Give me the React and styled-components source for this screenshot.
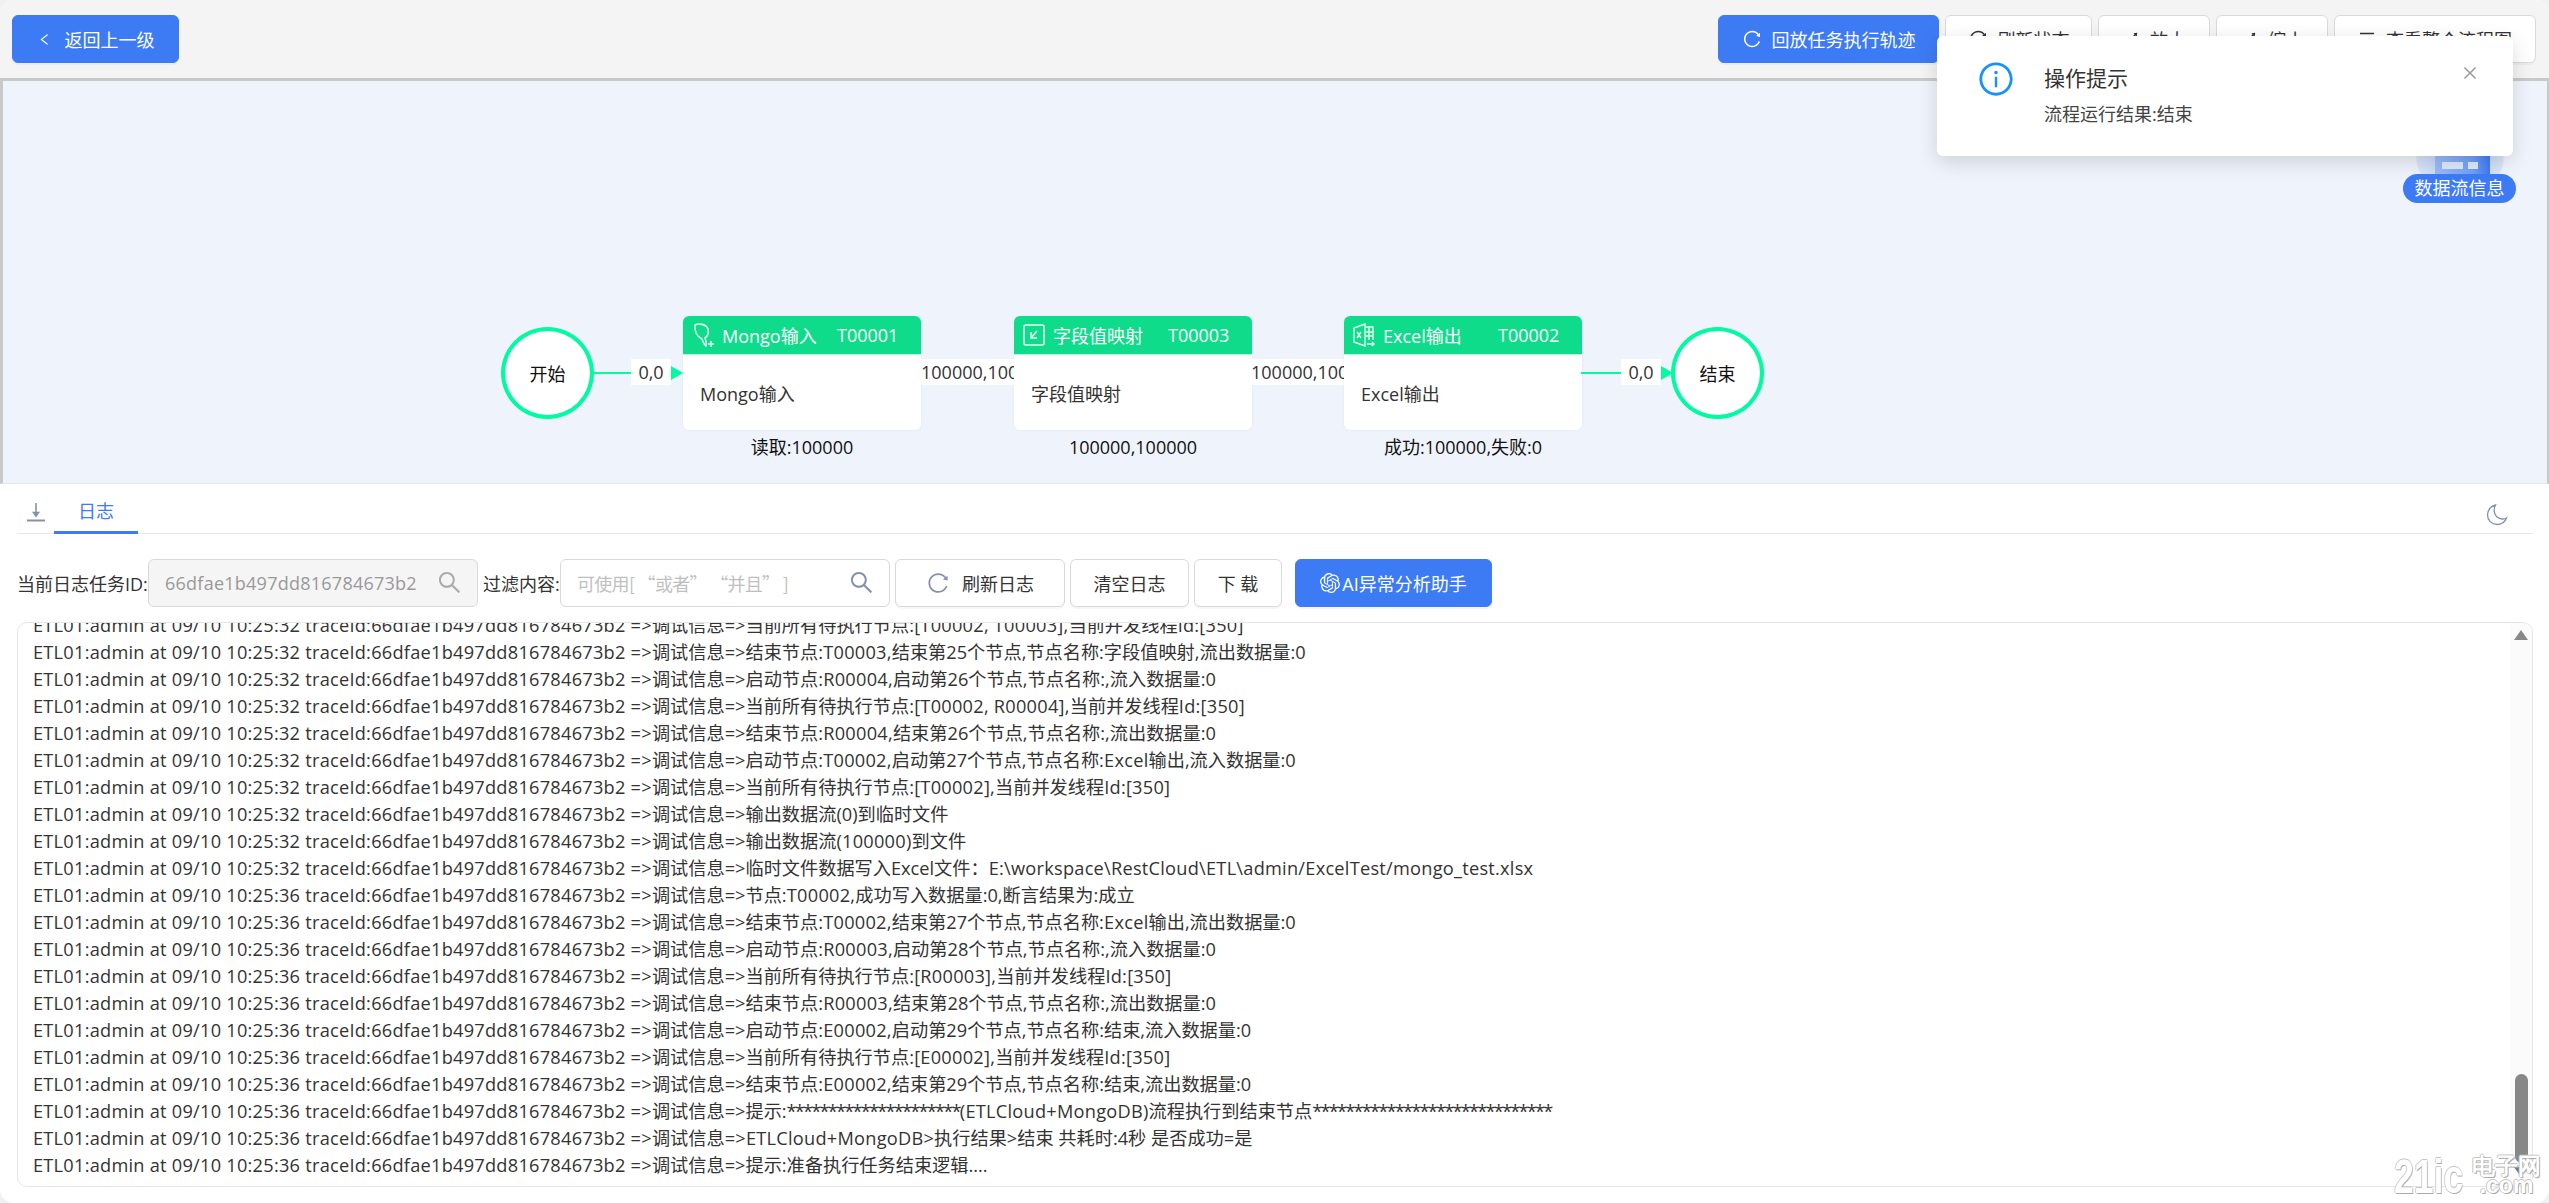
import React from "react";
import styled, { createGlobalStyle } from "styled-components";
import {
  AiOutlineLeft,
  AiOutlineReload,
  AiOutlineSearch,
  AiOutlineClose,
  AiOutlineInfoCircle,
  AiOutlineMenu,
  AiOutlineExpandAlt,
} from "react-icons/ai";
import { SiOpenai } from "react-icons/si";

const FONT = `"Open Sans", "Noto Sans CJK SC", sans-serif`;

const GlobalStyle = createGlobalStyle`
  html, body {
    margin: 0;
    padding: 0;
    background: #f1f1f1;
  }
  * { box-sizing: border-box; }
`;

const Page = styled.div`
  position: relative;
  width: 2549px;
  height: 1203px;
  display: flex;
  flex-direction: column;
  overflow: hidden;
  border-radius: 14px;
  background: #fff;
  font-family: ${FONT};
  font-size: 18px;
  color: #333;
`;

const TopBar = styled.div`
  height: 78px;
  flex: none;
  background: #f4f4f4;
  padding: 15px 13px 0 12px;
  display: flex;
  gap: 6px;
`;

const Btn = styled.div`
  width: ${(p) => p.$w}px;
  height: 48px;
  flex: none;
  display: flex;
  align-items: center;
  justify-content: center;
  gap: ${(p) => p.$gap ?? 10}px;
  border-radius: 6px;
  white-space: nowrap;
  font-size: 18px;
  background: ${(p) => (p.$primary ? "#3d7bf5" : "#fff")};
  color: ${(p) => (p.$primary ? "#fff" : "#333")};
  border: 1.5px solid ${(p) => (p.$primary ? "#3d7bf5" : "#d9d9d9")};
  box-shadow: 0 2px 0 rgba(0, 0, 0, 0.03);
`;

const Spacer = styled.div`
  flex: 1;
`;

const Canvas = styled.div`
  position: relative;
  height: 406px;
  flex: none;
  background: #eff3fb;
  border-top: 3px solid #c9c9c9;
  border-left: 3px solid #c9c9c9;
  border-right: 2px solid #c9c9c9;
  border-bottom: 1px solid #e6e6e6;
`;

const Terminal = styled.div`
  position: absolute;
  left: ${(p) => p.$x - 3}px;
  top: 246px;
  width: 93px;
  height: 92px;
  border-radius: 50%;
  border: 4px solid #00fba0;
  background: #fff;
  color: #111;
  display: flex;
  align-items: center;
  justify-content: center;
`;

const Edge = styled.div`
  position: absolute;
  left: ${(p) => p.$x - 3}px;
  top: 291px;
  width: ${(p) => p.$w}px;
  height: 2px;
  background: #00fba0;
`;

const EdgeLabel = styled.div`
  position: absolute;
  left: ${(p) => p.$x - 3}px;
  top: 278px;
  width: ${(p) => p.$w}px;
  height: 26px;
  line-height: 26px;
  background: #fff;
  color: #333;
  overflow: hidden;
  white-space: nowrap;
  text-align: ${(p) => p.$align || "center"};
`;

const Arrow = styled.div`
  position: absolute;
  left: ${(p) => p.$x - 3}px;
  top: 285px;
  width: 0;
  height: 0;
  border-style: solid;
  border-width: 7px 0 7px 12px;
  border-color: transparent transparent transparent #00fba0;
`;

const NodeWrap = styled.div`
  position: absolute;
  left: ${(p) => p.$x - 3}px;
  top: 235px;
  width: 238px;
`;

const NodeCard = styled.div`
  height: 114px;
  background: #fff;
  border-radius: 6px;
  overflow: hidden;
  box-shadow: 0 0 3px rgba(0, 0, 0, 0.06);
`;

const NodeHead = styled.div`
  height: 39px;
  background: #0edc8a;
  border-bottom: 1px solid #b5f5dc;
  color: #fff;
  padding-left: 9px;
  display: grid;
  grid-template-columns: 30px 115px auto;
  align-items: center;
  white-space: nowrap;
`;

const NodeBody = styled.div`
  padding: 26px 0 0 17px;
  line-height: 26px;
  color: #333;
`;

const NodeCaption = styled.div`
  margin-top: 5px;
  text-align: center;
  line-height: 24px;
  color: #111;
  white-space: nowrap;
`;

const FlowBadge = styled.div`
  position: absolute;
  right: 31px;
  top: 34px;
  width: 113px;
  display: flex;
  flex-direction: column;
  align-items: center;
`;

const FlowPill = styled.div`
  width: 113px;
  height: 29px;
  margin-top: -11px;
  border-radius: 15px;
  background: #3d7bf5;
  color: #fff;
  text-align: center;
  line-height: 29px;
  position: relative;
  white-space: nowrap;
`;

const LogArea = styled.div`
  flex: 1;
  min-height: 0;
  display: flex;
  flex-direction: column;
  padding: 0 16px 16px 17px;
`;

const TabRow = styled.div`
  height: 50px;
  flex: none;
  display: flex;
  border-bottom: 1.5px solid #e8e8e8;
  color: #7d88a5;
`;

const TabDownload = styled.div`
  width: 37px;
  padding: 18px 0 0 9px;
`;

const Tab = styled.div`
  width: 84px;
  height: 50px;
  text-align: center;
  line-height: 54px;
  color: #3d7bf5;
  border-bottom: 3px solid #3d7bf5;
`;

const MoonSlot = styled.div`
  margin-left: auto;
  padding: 20px 25px 0 0;
`;

const Toolbar = styled.div`
  height: 49px;
  flex: none;
  margin-top: 24px;
  display: flex;
  align-items: center;
  white-space: nowrap;
`;

const FieldLabel = styled.div`
  width: ${(p) => p.$w}px;
`;

const Field = styled.div`
  width: 330px;
  height: 48px;
  flex: none;
  display: flex;
  align-items: center;
  justify-content: space-between;
  padding: 0 14px 0 16px;
  border: 1.5px solid #d9d9d9;
  border-radius: 6px;
  margin-right: 5px;
  background: ${(p) => (p.$disabled ? "#f5f5f5" : "#fff")};
  color: ${(p) => (p.$disabled ? "#999" : "#bfbfbf")};
`;

const FieldId = styled.span`
  letter-spacing: 0.25px;
`;

const Placeholder = styled.span`
  font-family: "Noto Sans CJK SC", sans-serif;
  white-space: pre;
  letter-spacing: -0.7px;
`;

const ToolBtn = styled(Btn)`
  margin-right: ${(p) => p.$mr ?? 5}px;
`;

const LogBox = styled.div`
  flex: 1;
  min-height: 0;
  margin-top: 15px;
  display: flex;
  border: 1.5px solid #e6e6e6;
  border-radius: 10px;
  overflow: hidden;
  background: #fff;
`;

const LogLines = styled.div`
  flex: 1;
  min-width: 0;
  margin-top: -11px;
  padding-left: 15px;
`;

const LogLine = styled.div`
  height: 27px;
  line-height: 27px;
  white-space: nowrap;
  font-size: 18.2px;
  color: #333;
`;

const Ascii = styled.span`
  letter-spacing: 0.25px;
`;

const Stars = styled.span`
  letter-spacing: -1.77px;
`;

const Scroller = styled.div`
  width: 22px;
  flex: none;
  background: #fbfbfb;
  display: flex;
  flex-direction: column;
  align-items: center;
  padding-top: 7px;
`;

const Thumb = styled.div`
  width: 13px;
  height: 89px;
  margin-top: auto;
  border-radius: 7px;
  background: #878787;
`;

const Triangle = styled.div`
  width: 0;
  height: 0;
  flex: none;
  border-left: 7px solid transparent;
  border-right: 7px solid transparent;
  ${(p) =>
    p.$down
      ? "border-top: 10px solid #777; margin: 4px 0 9px;"
      : "border-bottom: 10px solid #888;"}
`;

const Notice = styled.div`
  position: absolute;
  left: 1937px;
  top: 36px;
  width: 576px;
  height: 120px;
  background: #fff;
  border-radius: 6px;
  box-shadow: 0 6px 20px rgba(0, 0, 0, 0.14);
  padding: 24px 0 0 40px;
  display: flex;
  z-index: 5;
`;

const NoticeText = styled.div`
  margin-left: 29px;
`;

const NoticeTitle = styled.div`
  font-size: 21px;
  line-height: 36px;
  color: #333;
`;

const NoticeDesc = styled.div`
  margin-top: 4px;
  line-height: 28px;
  color: #444;
`;

const NoticeClose = styled.div`
  position: absolute;
  right: 34px;
  top: 28px;
  color: #999;
  display: flex;
`;

const Watermark = styled.div`
  position: absolute;
  left: 2394px;
  top: 1157px;
  display: flex;
  align-items: flex-start;
  gap: 10px;
  color: #fff;
  z-index: 4;
  text-shadow: 1px 1px 0 #aaa, -1px 0 0 #c4c4c4, 0 -1px 0 #c4c4c4;
  font-family: "Liberation Sans", sans-serif;
`;

const MarkBig = styled.div`
  font-size: 48px;
  font-weight: 700;
  line-height: 40px;
  transform: scaleX(0.74);
  transform-origin: left;
  width: 68px;
`;

const MarkStack = styled.div`
  font-size: 23px;
  line-height: 19px;
  text-align: center;
  font-weight: 700;
`;

const MongoIcon = () => (
  <svg width="24" height="26" viewBox="0 0 24 26" fill="none" stroke="#d9fff0" strokeWidth="1.6">
    <path d="M3 3c4-2 11-1 13 4 1 4 0 7-3 9 1 3 2 6 1 8-2-1-3-4-4-7C5 15 2 9 3 3z" />
    <path d="M19 19v6M16 22h6" />
  </svg>
);

const MapIcon = () => (
  <svg width="22" height="26" viewBox="0 0 22 26" fill="none" stroke="#e6fff5" strokeWidth="1.6">
    <rect x="1" y="3" width="20" height="20" rx="2" />
    <path d="M14 9l-6 7M8 10v6h6" />
  </svg>
);

const ExcelIcon = () => (
  <svg width="22" height="26" viewBox="0 0 22 26" fill="none" stroke="#e6fff5" strokeWidth="1.4">
    <path d="M1 6l11-4v22L1 20z" />
    <path d="M12 5h8v13M12 10h8M12 14h8M16 5v13M14 22h7M19 20l2 2-2 2" />
    <path d="M4 10l4 6M8 10l-4 6" />
  </svg>
);

const DownloadIcon = () => (
  <svg width="20" height="20" viewBox="0 0 20 20" fill="none" stroke="#8490ad" strokeWidth="1.6">
    <path d="M10 1v12M7.500 10.500L10 14l2.500-3.500z" fill="#8490ad" />
    <path d="M1 18.500h18" strokeWidth="2" />
  </svg>
);

const MoonIcon = () => (
  <svg width="22" height="22" viewBox="0 0 22 22" fill="none" stroke="#8490ad" strokeWidth="1.3">
    <path d="M9.500 1C5 2 1.500 6 1.500 11c0 5 4 9.500 9.500 9.500 4 0 8-2.500 9.500-6.500-1.500 1-3.500 1.200-5.500.8C9 14 6.500 7 9.500 1z" />
  </svg>
);

const FlowIcon = () => (
  <svg width="90" height="70" viewBox="0 0 90 70">
    <defs>
      <radialGradient id="glow" cx="50%" cy="50%" r="50%">
        <stop offset="0%" stopColor="#a9c8f5" />
        <stop offset="100%" stopColor="#dbe7f9" />
      </radialGradient>
      <linearGradient id="dev" x1="0" y1="0" x2="1" y2="0">
        <stop offset="0%" stopColor="#9dbdf8" />
        <stop offset="70%" stopColor="#6f9ff7" />
        <stop offset="100%" stopColor="#3d7bf5" />
      </linearGradient>
    </defs>
    <circle cx="45" cy="40" r="44" fill="url(#glow)" />
    <rect x="20" y="0" width="55" height="70" fill="url(#dev)" />
    <rect x="27" y="47" width="21" height="7" fill="#dfe8fb" />
    <rect x="53" y="47" width="10" height="7" fill="#dfe8fb" />
  </svg>
);

const PREFIX_32 = "ETL01:admin at 09/10 10:25:32 traceId:66dfae1b497dd816784673b2 =>调试信息=>";
const PREFIX_36 = "ETL01:admin at 09/10 10:25:36 traceId:66dfae1b497dd816784673b2 =>调试信息=>";

const LOGS = [
  PREFIX_32 + "当前所有待执行节点:[T00002, T00003],当前并发线程Id:[350]",
  PREFIX_32 + "结束节点:T00003,结束第25个节点,节点名称:字段值映射,流出数据量:0",
  PREFIX_32 + "启动节点:R00004,启动第26个节点,节点名称:,流入数据量:0",
  PREFIX_32 + "当前所有待执行节点:[T00002, R00004],当前并发线程Id:[350]",
  PREFIX_32 + "结束节点:R00004,结束第26个节点,节点名称:,流出数据量:0",
  PREFIX_32 + "启动节点:T00002,启动第27个节点,节点名称:Excel输出,流入数据量:0",
  PREFIX_32 + "当前所有待执行节点:[T00002],当前并发线程Id:[350]",
  PREFIX_32 + "输出数据流(0)到临时文件",
  PREFIX_32 + "输出数据流(100000)到文件",
  PREFIX_32 + "临时文件数据写入Excel文件：E:\\workspace\\RestCloud\\ETL\\admin/ExcelTest/mongo_test.xlsx",
  PREFIX_36 + "节点:T00002,成功写入数据量:0,断言结果为:成立",
  PREFIX_36 + "结束节点:T00002,结束第27个节点,节点名称:Excel输出,流出数据量:0",
  PREFIX_36 + "启动节点:R00003,启动第28个节点,节点名称:,流入数据量:0",
  PREFIX_36 + "当前所有待执行节点:[R00003],当前并发线程Id:[350]",
  PREFIX_36 + "结束节点:R00003,结束第28个节点,节点名称:,流出数据量:0",
  PREFIX_36 + "启动节点:E00002,启动第29个节点,节点名称:结束,流入数据量:0",
  PREFIX_36 + "当前所有待执行节点:[E00002],当前并发线程Id:[350]",
  PREFIX_36 + "结束节点:E00002,结束第29个节点,节点名称:结束,流出数据量:0",
  PREFIX_36 + "提示:*********************(ETLCloud+MongoDB)流程执行到结束节点*****************************",
  PREFIX_36 + "ETLCloud+MongoDB>执行结果>结束 共耗时:4秒 是否成功=是",
  PREFIX_36 + "提示:准备执行任务结束逻辑....",
];

const NODES = [
  { x: 683, icon: <MongoIcon />, title: "Mongo输入", code: "T00001", caption: "读取:100000" },
  { x: 1014, icon: <MapIcon />, title: "字段值映射", code: "T00003", caption: "100000,100000" },
  { x: 1344, icon: <ExcelIcon />, title: "Excel输出", code: "T00002", caption: "成功:100000,失败:0" },
];

// long ascii runs and star runs need their own tracking to match the log font
const renderLog = (line) =>
  line.split(/(\*+|[\x20-\x29\x2b-\x7e]{6,})/).map((part, i) => {
    if (part.startsWith("*")) return <Stars key={i}>{part}</Stars>;
    if (part.length >= 6 && /^[\x20-\x7e]+$/.test(part)) return <Ascii key={i}>{part}</Ascii>;
    return part;
  });

const App = () => (
  <>
    <GlobalStyle />
    <Page>
      <TopBar>
        <Btn $primary $w={167} $gap={13}>
          <AiOutlineLeft size={15} />
          返回上一级
        </Btn>
        <Spacer />
        <Btn $primary $w={221}>
          <AiOutlineReload size={20} />
          回放任务执行轨迹
        </Btn>
        <Btn $w={147}>
          <AiOutlineReload size={20} />
          刷新状态
        </Btn>
        <Btn $w={112}>
          <AiOutlineExpandAlt size={18} />
          放大
        </Btn>
        <Btn $w={112}>
          <AiOutlineExpandAlt size={18} />
          缩小
        </Btn>
        <Btn $w={202}>
          <AiOutlineMenu size={18} />
          查看整个流程图
        </Btn>
      </TopBar>

      <Canvas>
        <Terminal $x={501}>开始</Terminal>
        <Edge $x={593} $w={40} />
        <EdgeLabel $x={631} $w={40}>0,0</EdgeLabel>
        <Arrow $x={671} />

        <EdgeLabel $x={921} $w={95} $align="left">100000,100000</EdgeLabel>
        <EdgeLabel $x={1251} $w={95} $align="left">100000,100000</EdgeLabel>

        {NODES.map((n) => (
          <NodeWrap key={n.code} $x={n.x}>
            <NodeCard>
              <NodeHead>
                {n.icon}
                <span>{n.title}</span>
                <span>{n.code}</span>
              </NodeHead>
              <NodeBody>{n.title}</NodeBody>
            </NodeCard>
            <NodeCaption>{n.caption}</NodeCaption>
          </NodeWrap>
        ))}

        <Edge $x={1581} $w={42} />
        <EdgeLabel $x={1621} $w={40}>0,0</EdgeLabel>
        <Arrow $x={1661} />
        <Terminal $x={1671}>结束</Terminal>

        <FlowBadge>
          <FlowIcon />
          <FlowPill>数据流信息</FlowPill>
        </FlowBadge>
      </Canvas>

      <LogArea>
        <TabRow>
          <TabDownload>
            <DownloadIcon />
          </TabDownload>
          <Tab>日志</Tab>
          <MoonSlot>
            <MoonIcon />
          </MoonSlot>
        </TabRow>

        <Toolbar>
          <FieldLabel $w={131}>当前日志任务ID:</FieldLabel>
          <Field $disabled>
            <FieldId>66dfae1b497dd816784673b2</FieldId>
            <AiOutlineSearch size={27} color="#aaa" />
          </Field>
          <FieldLabel $w={77}>过滤内容:</FieldLabel>
          <Field>
            <Placeholder>可使用[ “或者” “并且” ]</Placeholder>
            <AiOutlineSearch size={27} color="#8490ad" />
          </Field>
          <ToolBtn $w={170} $gap={12}>
            <AiOutlineReload size={24} color="#8490ad" />
            刷新日志
          </ToolBtn>
          <ToolBtn $w={119}>清空日志</ToolBtn>
          <ToolBtn $w={88} $mr={13}>下 载</ToolBtn>
          <ToolBtn $primary $w={197} $gap={2}>
            <SiOpenai size={20} />
            AI异常分析助手
          </ToolBtn>
        </Toolbar>

        <LogBox>
          <LogLines>
            {LOGS.map((line, i) => (
              <LogLine key={i}>{renderLog(line)}</LogLine>
            ))}
          </LogLines>
          <Scroller>
            <Triangle />
            <Thumb />
            <Triangle $down />
          </Scroller>
        </LogBox>
      </LogArea>

      <Notice>
        <AiOutlineInfoCircle size={38} color="#1890ff" />
        <NoticeText>
          <NoticeTitle>操作提示</NoticeTitle>
          <NoticeDesc>流程运行结果:结束</NoticeDesc>
        </NoticeText>
        <NoticeClose>
          <AiOutlineClose size={18} />
        </NoticeClose>
      </Notice>

      <Watermark>
        <MarkBig>21ic</MarkBig>
        <MarkStack>
          电子网
          <br />
          .com
        </MarkStack>
      </Watermark>
    </Page>
  </>
);

export default App;
